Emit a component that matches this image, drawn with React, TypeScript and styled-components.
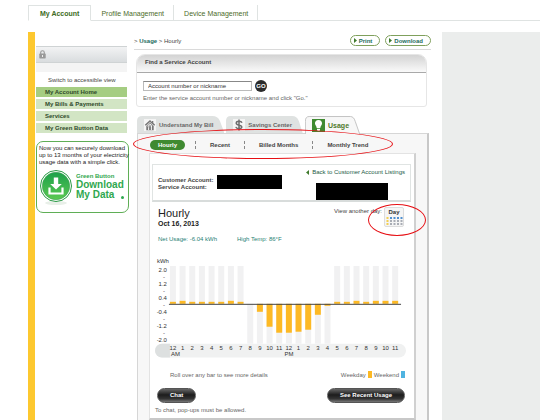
import React from "react";
import styled, { createGlobalStyle, css } from "styled-components";

const GlobalStyle = createGlobalStyle`
  * { box-sizing: border-box; }
  body {
    margin: 0;
    background: #fff;
    color: #444;
    font: 6px/8px "Liberation Sans", Arial, sans-serif;
  }
  button, input { font: inherit; margin: 0; }
  a { color: inherit; text-decoration: none; }
  p, h1, h2 { margin: 0; }
`;

const Page = styled.div`
  min-height: 100vh;
  display: flex;
  flex-direction: column;
  padding: 5px 20px 0 28px;
`;

const TopNav = styled.nav`
  display: flex;
  height: 16px;
  border-bottom: 1px solid #dfe3e2;
  font-size: 7px;
`;

const TopTab = styled.a<{ $active?: boolean }>`
  display: flex;
  align-items: center;
  height: 16px;
  padding: 2px 9px 0 10px;
  color: #4c6b2a;
  border-right: 1px solid #dfe3e2;
  ${(p) =>
    p.$active &&
    css`
      padding: 1px 11px 0;
      border: 1px solid #dfe3e2;
      border-bottom-color: #fff;
      background: #fff;
      font-weight: bold;
      color: #3d6b22;
    `}
`;

const Body = styled.div`
  flex: 1;
  display: flex;
  margin-top: 11px;
`;

const YellowRail = styled.div`
  width: 7px;
  background: #fdc82f;
`;

const Sidebar = styled.aside`
  width: 93px;
  margin: 14px 5px 0 1px;
`;

const LockBar = styled.div`
  height: 17px;
  padding: 3px;
  margin-right: 2px;
  border: 1px solid #cfd3d4;
  border-width: 1px 0;
  background: linear-gradient(#f2f3f4, #d9dcde);
`;

const LockStrip = styled.div`
  height: 9px;
  margin-right: 2px;
  background: #f4f4f4;
`;

const AccessLink = styled.a`
  display: block;
  padding: 4px 0 3px 12px;
  white-space: nowrap;
`;

const SideList = styled.ul`
  list-style: none;
  display: grid;
  gap: 2px;
  margin: 0 2px 0 0;
  padding: 0;
`;

const SideItem = styled.a<{ $active?: boolean }>`
  display: block;
  height: 10px;
  line-height: 10px;
  padding-left: 9px;
  font-weight: bold;
  color: #2f4a2b;
  background: ${(p) => (p.$active ? "#a5cd82" : "#d2e5c4")};
`;

const GreenCard = styled.section`
  height: 72px;
  margin-top: 8px;
  padding: 3px 2px;
  border: 1px solid #5fae56;
  border-radius: 7px;
  color: #222;
  line-height: 7px;
  white-space: nowrap;
`;

const GreenRow = styled.a`
  display: flex;
  gap: 2px;
  margin-top: 3px;
  color: #2fa84f;
  font-weight: bold;
`;

const GreenWords = styled.div`
  padding-top: 4px;
  line-height: 7px;
`;

const GreenBig = styled.div`
  display: flex;
  justify-content: space-between;
  align-items: flex-end;
  font-size: 10px;
  line-height: 10px;
`;

const GreenDot = styled.span`
  width: 3px;
  height: 3px;
  margin-bottom: 1px;
  border-radius: 50%;
  background: #2fa84f;
`;

const Main = styled.main`
  flex: 1;
  min-width: 0;
  display: flex;
  flex-direction: column;
`;

const RightRail = styled.div`
  width: 98px;
  margin-left: 11px;
  background: #ebedec;
`;

const CrumbRow = styled.div`
  display: flex;
  gap: 5px;
  height: 18px;
  padding-top: 3px;
  border-bottom: 1px solid #dadada;
`;

const Crumbs = styled.div`
  flex: 1;
  padding-top: 2px;
  a { font-weight: bold; color: #1c6b5c; }
`;

const OutlineButton = styled.button`
  display: flex;
  align-items: center;
  gap: 2px;
  height: 11px;
  padding: 0 7px 0 3px;
  border: 1px solid #7fa05c;
  border-radius: 6px;
  background: #fff;
  color: #1c6b5c;
  font-weight: bold;
`;

const Finder = styled.section`
  height: 53px;
  margin: 4px 4px 0 2px;
  border: 1px solid #e6e6e6;
  border-radius: 9px 9px 3px 3px;
  overflow: hidden;
`;

const FinderTitle = styled.h2`
  height: 18px;
  padding: 3px 8px;
  border-bottom: 1px solid #a9a9a9;
  background: linear-gradient(#d3d3d3, #fafafa);
  font-size: 6px;
  line-height: 8px;
  color: #444;
`;

const FinderForm = styled.form`
  display: flex;
  align-items: center;
  gap: 3px;
  padding: 7px 6px 2px;
`;

const FinderInput = styled.input`
  width: 109px;
  height: 10px;
  padding: 0 4px;
  border: 1px solid #bbb;
  border-top-color: #888;
  color: #333;
  &::placeholder { color: #333; opacity: 1; }
`;

const GoButton = styled.button`
  width: 12px;
  height: 12px;
  padding: 0;
  border: 0;
  border-radius: 50%;
  background: #2b2b2b;
  color: #fff;
  line-height: 12px;
  font-weight: bold;
`;

const FinderHint = styled.p`
  padding-left: 6px;
  white-space: nowrap;
  color: #666;
`;

const Tabs = styled.div`
  display: flex;
  gap: 2px;
  height: 17px;
  margin: 9px 0 0 3px;
`;

const TabButton = styled.button<{ $active?: boolean }>`
  position: relative;
  z-index: 0;
  display: flex;
  align-items: center;
  gap: 3px;
  height: ${(p) => (p.$active ? 18 : 17)}px;
  padding: 1px 11px 0 7px;
  border: 0;
  background: none;
  font-size: ${(p) => (p.$active ? 7 : 6)}px;
  font-weight: bold;
  white-space: nowrap;
  color: ${(p) => (p.$active ? "#4f7a2c" : "#666")};
`;

const TabShape = styled.svg`
  position: absolute;
  inset: 0;
  width: 100%;
  height: 100%;
  z-index: -1;
`;

const Panel = styled.section`
  flex: 1;
  margin: 0 2px 0 3px;
  padding: 6px 11px 0;
  border: 1px solid #d6d6d6;
  border-right: 2px solid #c8c8c8;
  border-bottom: 0;
  background: #f7f7f7;
`;

const SubNav = styled.nav`
  position: relative;
  display: flex;
  align-items: center;
  height: 10px;
`;

const SubLink = styled.a<{ $active?: boolean }>`
  height: 10px;
  line-height: 10px;
  padding: 0 4px;
  font-weight: bold;
  white-space: nowrap;
  border-radius: 5px;
  ${(p) => p.$active && css`margin-left: 1px; padding: 0 8px; background: #3f8a31; color: #fff;`}
`;

const SubDivider = styled.span`
  height: 8px;
  margin: 0 10px;
  border-left: 1px dashed #888;
`;

const Ring = styled.div<{ $top: number; $left: number; $right: number; $height: number }>`
  position: absolute;
  z-index: 2;
  top: ${(p) => p.$top}px;
  left: ${(p) => p.$left}px;
  right: ${(p) => p.$right}px;
  height: ${(p) => p.$height}px;
  border: 1px solid #e60f14;
  border-radius: 50%;
  pointer-events: none;
`;

const Sheet = styled.div`
  height: 267px;
  margin-top: 3px;
  padding-top: 10px;
  border: 1px solid #e3e3e3;
  border-right: 2px solid #d0d0d0;
  border-bottom: 2px solid #c8c8c8;
  background: #fff;
`;

const AccountBox = styled.div`
  display: flex;
  justify-content: space-between;
  height: 38px;
  margin: 0 3px 0 2px;
  padding: 3px 5px 0;
  border: 1px solid #e0e4e3;
  border-bottom: 2px solid #d8dcdb;
`;

const AccountNames = styled.div`
  display: flex;
  gap: 2px;
  padding-top: 7px;
  line-height: 7px;
  font-weight: bold;
  white-space: nowrap;
`;

const AccountLabels = styled.div`
  min-width: 57px;
  padding-top: 2px;
`;

const Redacted = styled.div<{ $w: number; $h: number }>`
  width: ${(p) => p.$w}px;
  height: ${(p) => p.$h}px;
  background: #000;
`;

const BackColumn = styled.div`
  display: flex;
  flex-direction: column;
  gap: 7px;
  ${Redacted} { margin-left: 10px; }
`;

const BackLink = styled.a`
  display: flex;
  align-items: center;
  gap: 3px;
  line-height: 8px;
  white-space: nowrap;
  color: #1c5b46;
`;

const Heading = styled.div`
  display: flex;
  justify-content: space-between;
  height: 31px;
  padding: 4px 10px 0 8px;
`;

const Title = styled.h1`
  font-size: 11px;
  line-height: 14px;
  font-weight: normal;
  color: #222;
`;

const DateLine = styled.p`
  font-size: 7px;
  font-weight: bold;
  color: #222;
`;

const DayPicker = styled.div`
  position: relative;
  display: flex;
  gap: 2px;
  padding-top: 1px;
`;

const DayButton = styled.button`
  display: grid;
  align-content: start;
  justify-items: center;
  width: 20px;
  height: 20px;
  padding: 0;
  border: 1px solid #ddd;
  border-radius: 2px;
  background: #f5f5f5;
  color: #333;
  font-weight: bold;
`;

const Facts = styled.div`
  display: flex;
  gap: 20px;
  padding: 2px 8px 0;
  color: #1f8275;
  white-space: nowrap;
`;

const Chart = styled.svg`
  display: block;
  width: 100%;
  margin-top: 13px;
  fill: #333;
  font-size: 6px;
`;

const LegendRow = styled.div`
  display: flex;
  justify-content: space-between;
  padding: 13px 9px 0 20px;
  color: #666;
`;

const Legend = styled.div`
  display: flex;
  gap: 2px;
`;

const Swatch = styled.span<{ $color: string }>`
  width: 4px;
  height: 7px;
  background: ${(p) => p.$color};
`;

const ActionRow = styled.div`
  display: flex;
  justify-content: space-between;
  padding: 9px 9px 0 7px;
`;

const DarkButton = styled.button`
  height: 15px;
  padding: 0 12px;
  border: 1px solid #555;
  border-radius: 8px;
  background: linear-gradient(#666, #1d1d1d 45%, #333 75%, #777);
  color: #fff;
  line-height: 12px;
  font-weight: bold;
`;

const ChatNote = styled.p`
  padding: 3px 5px;
  color: #666;
`;

const HOURS = ["12", "1", "2", "3", "4", "5", "6", "7", "8", "9", "10", "11", "12", "1", "2", "3", "4", "5", "6", "7", "8", "9", "10", "11"];
const USAGE = [2, 3, 2, 2, 2, 2, 3, 2, 0, -8, -23, -29, -29, -28, -26, -11, -2, 2, 2, 3, 2, 3, 3, 3];
const SCALE = ["2.0", "-", "1.2", "-", "0.4", "-", "-0.4", "-", "-1.2", "-", "-2.0"];
const ZERO = 48;

function UsageChart() {
  return (
    <Chart viewBox="0 0 265 102" role="img" aria-label="Hourly usage in kWh">
      <text x="7" y="7">kWh</text>
      {SCALE.map((t, i) => (
        <text key={i} x={t === "-" ? 14 : 17} y={16 + i * 7} textAnchor={t === "-" ? "middle" : "end"}>{t}</text>
      ))}
      <rect x="5" y="88" width="252" height="14" rx="7" fill="#f0f1f1" />
      <path d="M20 88h-8a7 7 0 0 0 0 14h8z" fill="#dde0e0" />
      {HOURS.map((h, i) => {
        const v = USAGE[i];
        const x = 20 + i * 9.7;
        return (
          <g key={i}>
            <rect x={x} y={v > 0 ? 10 : ZERO} width="6" height={v > 0 ? 38 : 40} fill="#f1f1f2" />
            <rect x={x} y={v > 0 ? ZERO - v : ZERO} width="6" height={Math.abs(v)} fill="#fdb924" />
            <text x={x + 3} y="94" textAnchor="middle">{h}</text>
          </g>
        );
      })}
      <path d="M19 48.5h233" stroke="#444" />
      <text x="21" y="100">AM</text>
      <text x="135" y="100">PM</text>
    </Chart>
  );
}

const Triangle = ({ left }: { left?: boolean }) => (
  <svg width="3" height="5" viewBox="0 0 3 5" aria-hidden="true">
    <path d={left ? "M3 0v5L0 2.5z" : "M0 0v5l3-2.5z"} fill="#3f7a2c" />
  </svg>
);

const Lock = () => (
  <svg width="7" height="9" viewBox="0 0 7 9" aria-hidden="true">
    <path d="M1.7 4V2.5a1.8 1.8 0 0 1 3.6 0V4" fill="none" stroke="#999" strokeWidth="1.1" />
    <rect x=".3" y="3.6" width="6.4" height="4.8" rx=".6" fill="#999" />
    <path d="M3.5 5v2" stroke="#eee" />
  </svg>
);

const HouseIcon = () => (
  <svg width="12" height="12" viewBox="0 0 12 12" aria-hidden="true">
    <rect width="12" height="12" fill="#f5f5f5" />
    <path d="M6 1 .8 5.8l1 .9L6 3l4.2 3.7 1-.9-1.9-1.7V2H8v1z" fill="#777" />
    <path d="M6 3.6 2.3 6.9v4.3h7.4V6.9z" fill="#777" />
    <path d="M4.6 11V8.3A1.8 1.8 0 1 1 7.4 8v3M6 5.5v2" fill="none" stroke="#f5f5f5" />
  </svg>
);

const DollarIcon = () => (
  <svg width="12" height="12" viewBox="0 0 12 12" aria-hidden="true">
    <rect width="12" height="12" fill="#f5f5f5" />
    <path d="M9 3.8C8.5 2.6 7.3 2.3 6 2.3c-3.4 0-3.7 3-.6 3.6 4.4.7 4.4 3.8.6 3.8-1.6 0-2.8-.5-3.2-1.800M6 .6v10.800" fill="none" stroke="#6d6d6d" strokeWidth="1.5" />
  </svg>
);

const BulbIcon = () => (
  <svg width="13" height="13" viewBox="0 0 13 13" aria-hidden="true">
    <rect width="13" height="13" fill="#3f8a31" />
    <path d="M6.5 1C4 1 2.7 3 3 4.8 3.2 6.3 4.6 7 4.7 9h3.6c.1-2 1.5-2.7 1.7-4.2C10.3 3 9 1 6.5 1zM5 9.700h3v1.600L7.300 12H5.700L5 11.300z" fill="#fff" />
  </svg>
);

const DownloadBadge = () => (
  <svg width="35" height="38" viewBox="0 0 35 38" aria-hidden="true">
    <defs>
      <linearGradient id="badge" x1="0" y1="0" x2="0" y2="1">
        <stop offset="0" stopColor="#1ca04a" />
        <stop offset="1" stopColor="#5cc952" />
      </linearGradient>
    </defs>
    <ellipse cx="17" cy="34" rx="11" ry="2" fill="#e8efe8" />
    <circle cx="17" cy="17" r="15.5" fill="#fff" stroke="#2b9a46" />
    <circle cx="17" cy="17" r="13.7" fill="url(#badge)" stroke="#3aa252" strokeWidth=".6" />
    <path d="M14.8 8.5h4.400v6.500h3.600L17 20.500 11.200 15h3.600z" fill="#fff" />
    <path d="M10.5 18.5v6h13v-6" fill="none" stroke="#fff" strokeWidth="2.2" />
  </svg>
);

const CalendarDots = () => (
  <svg width="18" height="10" viewBox="0 0 18 10" aria-hidden="true">
    {[0, 1, 2].map((r) =>
      [0, 1, 2, 3, 4].map((c) => (
        <rect key={`${r}${c}`} x={1.5 + c * 3.5} y={1 + r * 3} width="2" height="2" fill={c === 0 ? "#f3cf52" : r === 0 ? "#4f8fd0" : "#a9adb5"} />
      ))
    )}
  </svg>
);

function Tab({ active, icon, children }: { active?: boolean; icon: React.ReactNode; children: string }) {
  return (
    <TabButton $active={active} type="button">
      <TabShape viewBox="0 0 80 17" preserveAspectRatio="none" aria-hidden="true">
        <path
          d={active ? "M.5 17V5Q.5 .5 6 .5H66Q71 .5 73 5L79.5 17" : "M0 17V5Q0 0 5 0H69Q74 0 76 5L80 17"}
          fill={active ? "#f7f7f7" : "#dfe2e1"}
          stroke={active ? "#c4c4c4" : "none"}
          vectorEffect="non-scaling-stroke"
        />
      </TabShape>
      {icon}
      {children}
    </TabButton>
  );
}

export default function App() {
  return (
    <>
      <GlobalStyle />
      <Page>
        <TopNav>
          <TopTab href="#" $active>My Account</TopTab>
          <TopTab href="#">Profile Management</TopTab>
          <TopTab href="#">Device Management</TopTab>
        </TopNav>
        <Body>
          <YellowRail />
          <Sidebar>
            <LockBar><Lock /></LockBar>
            <LockStrip />
            <AccessLink href="#">Switch to accessible view</AccessLink>
            <SideList>
              <li><SideItem href="#" $active>My Account Home</SideItem></li>
              <li><SideItem href="#">My Bills &amp; Payments</SideItem></li>
              <li><SideItem href="#">Services</SideItem></li>
              <li><SideItem href="#">My Green Button Data</SideItem></li>
            </SideList>
            <GreenCard>
              <p>Now you can securely download<br />up to 13 months of your electricity<br />usage data with a simple click.</p>
              <GreenRow href="#">
                <DownloadBadge />
                <GreenWords>
                  Green Button
                  <GreenBig>Download</GreenBig>
                  <GreenBig>My Data<GreenDot /></GreenBig>
                </GreenWords>
              </GreenRow>
            </GreenCard>
          </Sidebar>
          <Main>
            <CrumbRow>
              <Crumbs>&gt; <a href="#">Usage</a> &gt; Hourly</Crumbs>
              <OutlineButton type="button"><Triangle />Print</OutlineButton>
              <OutlineButton type="button"><Triangle />Download</OutlineButton>
            </CrumbRow>
            <Finder>
              <FinderTitle>Find a Service Account</FinderTitle>
              <FinderForm>
                <FinderInput aria-label="Account number or nickname" placeholder="Account number or nickname" />
                <GoButton type="button">GO</GoButton>
              </FinderForm>
              <FinderHint>Enter the service account number or nickname and click "Go."</FinderHint>
            </Finder>
            <Tabs>
              <Tab icon={<HouseIcon />}>Understand My Bill</Tab>
              <Tab icon={<DollarIcon />}>Savings Center</Tab>
              <Tab active icon={<BulbIcon />}>Usage</Tab>
            </Tabs>
            <Panel>
              <SubNav>
                <SubLink href="#" $active>Hourly</SubLink>
                <SubDivider />
                <SubLink href="#">Recent</SubLink>
                <SubDivider />
                <SubLink href="#">Billed Months</SubLink>
                <SubDivider />
                <SubLink href="#">Monthly Trend</SubLink>
                <Ring $top={-11} $left={-16} $right={23} $height={30} />
              </SubNav>
              <Sheet>
                <AccountBox>
                  <AccountNames>
                    <AccountLabels>Customer Account:<br />Service Account:</AccountLabels>
                    <Redacted $w={65} $h={14} />
                  </AccountNames>
                  <BackColumn>
                    <BackLink href="#"><Triangle left />Back to Customer Account Listings</BackLink>
                    <Redacted $w={72} $h={17} />
                  </BackColumn>
                </AccountBox>
                <Heading>
                  <div>
                    <Title>Hourly</Title>
                    <DateLine>Oct 16, 2013</DateLine>
                  </div>
                  <DayPicker>
                    View another day:
                    <DayButton type="button">Day<CalendarDots /></DayButton>
                    <Ring $top={-2} $left={34} $right={-22} $height={32} />
                  </DayPicker>
                </Heading>
                <Facts><span>Net Usage: -6.04 kWh</span><span>High Temp: 86°F</span></Facts>
                <UsageChart />
                <LegendRow>
                  <span>Roll over any bar to see more details</span>
                  <Legend>Weekday<Swatch $color="#fdb924" />Weekend<Swatch $color="#4fb3e0" /></Legend>
                </LegendRow>
                <ActionRow>
                  <DarkButton type="button">Chat</DarkButton>
                  <DarkButton type="button">See Recent Usage</DarkButton>
                </ActionRow>
                <ChatNote>To chat, pop-ups must be allowed.</ChatNote>
              </Sheet>
            </Panel>
          </Main>
          <RightRail />
        </Body>
      </Page>
    </>
  );
}
